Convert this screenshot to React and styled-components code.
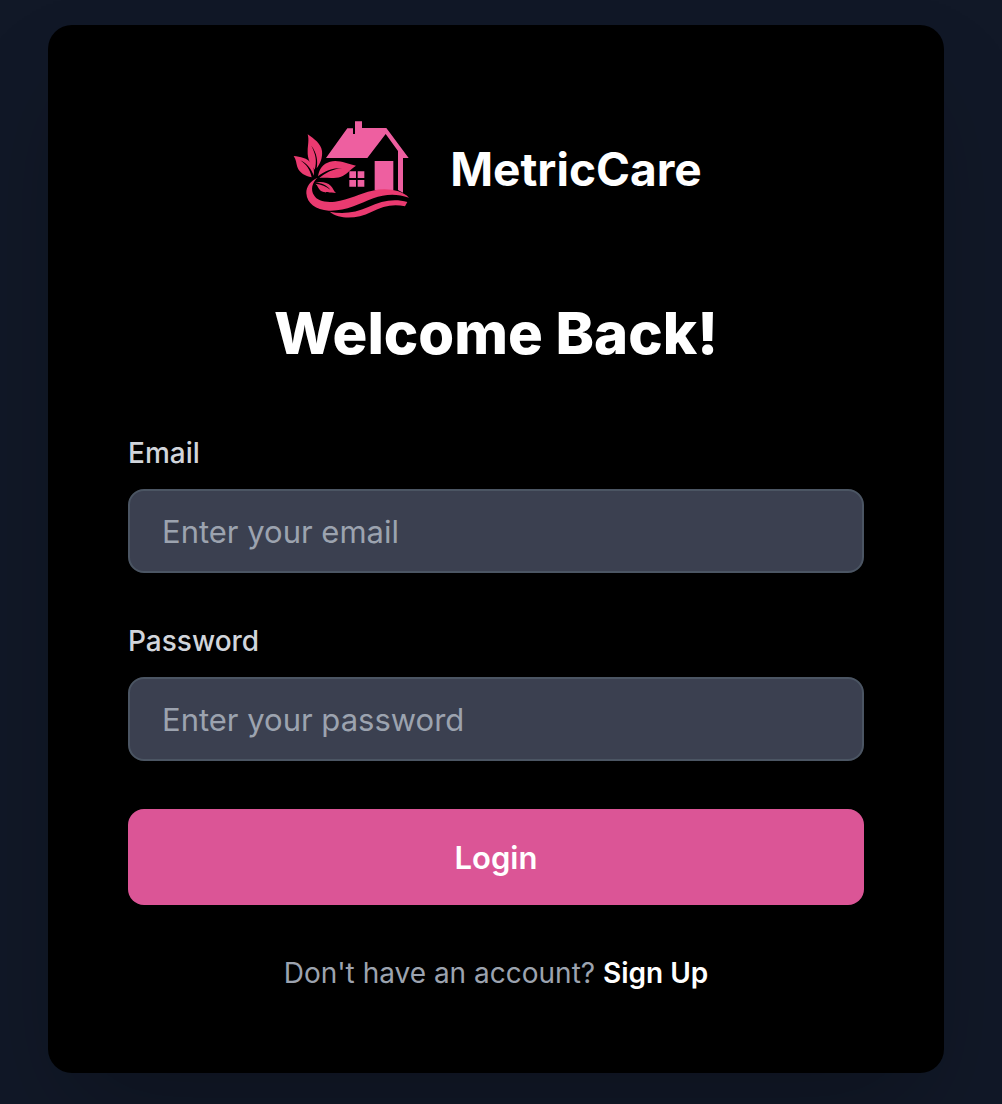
import React from "react";
import styled, { createGlobalStyle } from "styled-components";

const GlobalStyle = createGlobalStyle`
  *, *::before, *::after { box-sizing: border-box; }
  body {
    margin: 0;
    background: #111827;
    font-family: Inter, "Liberation Sans", sans-serif;
    color: #ffffff;
  }
`;

const Page = styled.main`
  display: flex;
  justify-content: center;
  align-items: center;
  min-height: 100vh;
  padding: 24px 58px 30px 48px;
`;

const Card = styled.section`
  width: 100%;
  max-width: 896px;
  padding: 80px;
  border-radius: 24px;
  background: #000000;
  box-shadow: 0 50px 100px -24px rgba(0, 0, 0, 0.25);
`;

const Brand = styled.header`
  display: flex;
  justify-content: center;
  align-items: center;
  gap: 32px;
  margin-bottom: 64px;
`;

const Logo = styled.svg`
  width: 128px;
  height: 128px;
  flex: none;
`;

const BrandName = styled.span`
  font-size: 46px;
  line-height: 64px;
  font-weight: 700;
`;

const Title = styled.h1`
  margin: 0 0 64px;
  font-size: 58px;
  line-height: 72px;
  font-weight: 800;
  text-align: center;
`;

const Form = styled.form`
  display: flex;
  flex-direction: column;
  gap: 48px;
`;

const Field = styled.div`
  display: flex;
  flex-direction: column;
  gap: 16px;
`;

const Label = styled.label`
  font-size: 28px;
  line-height: 40px;
  font-weight: 500;
  color: #d1d5db;
`;

const Input = styled.input`
  width: 100%;
  height: 84px;
  padding: 0 32px;
  border: 2px solid #4b5563;
  border-radius: 16px;
  background: #3b4050;
  color: #ffffff;
  font-family: inherit;
  font-size: 31px;
  outline: none;

  &::placeholder { color: #9ca3af; opacity: 1; }
  &:focus { border-color: #db5596; }
`;

const Submit = styled.button`
  height: 96px;
  border: 0;
  border-radius: 16px;
  background: #db5596;
  color: #ffffff;
  font-family: inherit;
  font-size: 31px;
  font-weight: 600;
  cursor: pointer;
`;

const Footer = styled.p`
  margin: 48px 0 0;
  font-size: 28px;
  line-height: 40px;
  color: #9ca3af;
  text-align: center;
`;

const SignUp = styled.a`
  color: #ffffff;
  font-weight: 600;
  text-decoration: none;
`;

function HouseLogo() {
  return (
    <Logo viewBox="18 -15 384 384" aria-hidden="true">
      <g fill="#ee5fa0">
        <path d="M126 144 190 55H207V72H213V34H234V54H307L374 144H357V248L342 240V123L305 72L250 144Z" />
        <path d="M272 153H328V240H272Z" />
        <path d="M196 184H216V204H196ZM221 184H241V204H221ZM196 210H216V230H196ZM221 210H241V230H221Z" />
      </g>
      <g fill="#ea3a70">
        <path d="M71 73C91 87 111 101 114 123C116 143 109 161 98 175C102 153 99 130 82 107C96 134 99 154 92 179C79 163 70 147 71 124C71 106 76 91 71 73Z" />
        <path d="M29 138C49 141 70 143 82 160C90 171 91 183 89 197C83 178 69 160 49 151C68 164 78 179 83 202C63 197 47 190 40 171C36 159 37 149 29 138Z" />
        <path d="M102 199C105 176 117 161 138 155C164 148 188 161 216 167C198 178 190 193 171 200C151 207 127 202 106 204C126 187 146 178 175 174C144 174 120 184 102 199Z" />
        <path d="M94 218C111 214 130 217 140 227C147 234 149 243 156 249C139 246 121 250 110 242C102 236 102 226 94 221C112 223 126 229 139 239C128 225 113 218 94 218Z" />
        <path d="M101 203C84 217 79 239 90 256C99 272 124 279 153 275C195 269 230 249 265 242C306 233 352 239 375 263C338 250 302 252 268 265C224 282 185 304 134 302C96 300 69 281 67 250C66 229 80 212 101 203Z" />
        <path d="M137 305C177 313 216 308 253 291C292 272 332 265 370 276L363 289C326 281 296 289 262 306C218 327 169 330 137 305Z" />
      </g>
    </Logo>
  );
}

export default function App() {
  return (
    <>
      <GlobalStyle />
      <Page>
        <Card>
          <Brand>
            <HouseLogo />
            <BrandName>MetricCare</BrandName>
          </Brand>
          <Title>Welcome Back!</Title>
          <Form onSubmit={(event) => event.preventDefault()}>
            <Field>
              <Label htmlFor="email">Email</Label>
              <Input id="email" type="email" placeholder="Enter your email" />
            </Field>
            <Field>
              <Label htmlFor="password">Password</Label>
              <Input id="password" type="password" placeholder="Enter your password" />
            </Field>
            <Submit type="submit">Login</Submit>
          </Form>
          <Footer>
            Don't have an account? <SignUp href="#signup">Sign Up</SignUp>
          </Footer>
        </Card>
      </Page>
    </>
  );
}
